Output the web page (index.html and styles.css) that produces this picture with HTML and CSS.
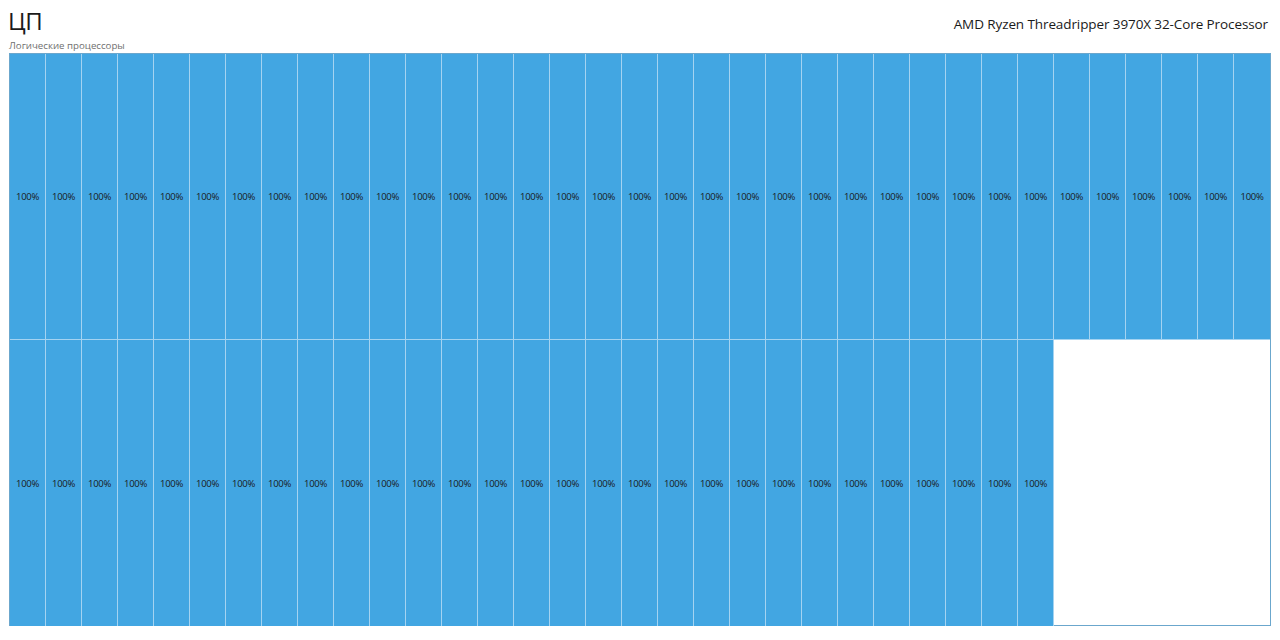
FILE: index.html
```html
<!DOCTYPE html>
<html>
<head>
	<meta charset="utf-8">
	<title>ЦП</title>
	<link rel="stylesheet" href="styles.css">
</head>
<body>
	<div class="page">
		<div class="header">
			<div class="left">
				<h1>ЦП</h1>
				<p class="sub">Логические процессоры</p>
			</div>
			<div class="model">AMD Ryzen Threadripper 3970X 32-Core Processor</div>
		</div>
		<div class="grid" id="grid"></div>
	</div>

	<script type="text/javascript">
		let grid=document.querySelector("#grid");
		for(let i=0;i<64;i++){
			let cell=document.createElement("div");
			cell.className="cell";
			cell.innerText="100%";
			grid.appendChild(cell);
		}
	</script>
</body>
</html>
```

FILE: styles.css
```css
*{
	margin: 0;
	padding: 0;
	box-sizing: border-box;
}
body{
	background: #fff;
	font-family: "Open Sans", "Noto Sans", sans-serif;
	color: #1a1a1a;
}
.page{
	padding: 0 9px 0 9px;
}
.header{
	display: flex;
	justify-content: space-between;
	align-items: flex-start;
	height: 53px;
}
.header h1{
	font-weight: 400;
	font-size: 24px;
	line-height: 24px;
	margin-top: 9px;
	margin-left: -1px;
	letter-spacing: -0.5px;
}
.sub{
	font-size: 9.7px;
	color: #707070;
	margin-top: 6px;
}
.model{
	font-size: 13.5px;
	letter-spacing: -0.1px;
	margin-top: 15px;
	margin-right: 3px;
}
.grid{
	display: grid;
	grid-template-columns: repeat(35, 36px);
	grid-template-rows: repeat(2, 286px);
	width: 1262px;
	height: 573px;
	border: 1px solid #6ba7cd;
	background: #fff;
}
.cell{
	background: #42a6e2;
	border-right: 1px solid #a4d3f1;
	border-bottom: 1px solid #a4d3f1;
	display: flex;
	align-items: center;
	justify-content: center;
	font-size: 9.5px;
	color: #1a1a1a;
	letter-spacing: -0.3px;
}
.cell:nth-child(35n){
	border-right: none;
}
.cell:nth-child(n+36){
	border-bottom: none;
}
```
